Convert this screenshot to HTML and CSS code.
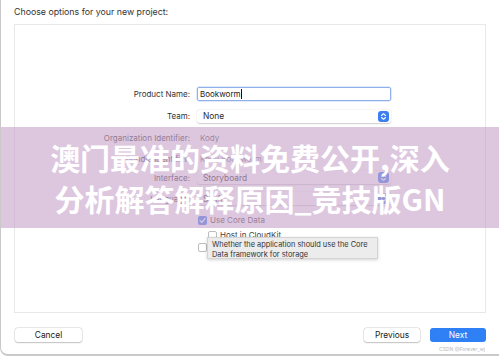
FILE: index.html
```html
<!DOCTYPE html>
<html lang="en">

<head>
    <meta charset="UTF-8">
    <meta name="viewport" content="width=device-width, initial-scale=1.0">
    <title>New Project Options</title>
    <link rel="stylesheet" href="styles.css">
</head>

<body>
    <div class="window">
        <div class="title">Choose options for your new project:</div>

        <div class="panel">
            <div class="form">
                <div class="row h22">
                    <label class="label">Product Name:</label>
                    <div class="field input">Bookworm<span class="caret"></span></div>
                </div>
                <div class="row h22">
                    <label class="label">Team:</label>
                    <div class="field popup">None<span class="stepper"><svg viewBox="0 0 11 11" width="11" height="11"><path d="M3.5 4.5 L5.5 2.7 L7.5 4.5 M3.5 6.5 L5.5 8.3 L7.5 6.5" fill="none" stroke="#fff" stroke-width="1.1" stroke-linecap="round" stroke-linejoin="round"/></svg></span></div>
                </div>
                <div class="row h22">
                    <label class="label">Organization Identifier:</label>
                    <div class="field plain">Kody</div>
                </div>
                <div class="row h19">
                    <label class="label">Bundle Identifier:</label>
                    <div class="field plain muted">Kody.Bookworm</div>
                </div>
                <div class="row h19">
                    <label class="label">Interface:</label>
                    <div class="field popup">Storyboard<span class="stepper"><svg viewBox="0 0 11 11" width="11" height="11"><path d="M3.5 4.5 L5.5 2.7 L7.5 4.5 M3.5 6.5 L5.5 8.3 L7.5 6.5" fill="none" stroke="#fff" stroke-width="1.1" stroke-linecap="round" stroke-linejoin="round"/></svg></span></div>
                </div>
                <div class="row h23">
                    <label class="label">Language:</label>
                    <div class="field popup">Swift<span class="stepper"><svg viewBox="0 0 11 11" width="11" height="11"><path d="M3.5 4.5 L5.5 2.7 L7.5 4.5 M3.5 6.5 L5.5 8.3 L7.5 6.5" fill="none" stroke="#fff" stroke-width="1.1" stroke-linecap="round" stroke-linejoin="round"/></svg></span></div>
                </div>
                <div class="row h20">
                    <span></span>
                    <div class="check"><span class="box on"><svg viewBox="0 0 9 9" width="9" height="9"><path d="M2 4.6 L3.8 6.4 L7 2.6" fill="none" stroke="#fff" stroke-width="1.3" stroke-linecap="round" stroke-linejoin="round"/></svg></span>Use Core Data</div>
                </div>
                <div class="row h10">
                    <span></span>
                    <div class="check indent"><span class="box"></span>Host in CloudKit</div>
                </div>
                <div class="row h14">
                    <span></span>
                    <div class="check"><span class="box"></span>Include Tests</div>
                </div>
            </div>
        </div>

        <div class="footer">
            <button class="btn">Cancel</button>
            <div class="spacer"></div>
            <button class="btn">Previous</button>
            <button class="btn primary">Next</button>
        </div>

        <div class="tooltip">Whether the application should use the Core<br>Data framework for storage</div>

        <div class="banner">澳门最准的资料免费公开,深入<br>分析解答解释原因_竞技版GN</div>

        <div class="watermark">CSDN @Forever_wj</div>
    </div>
</body>

</html>
```

FILE: styles.css
```css
/* Xcode style "new project" sheet */
body {
    margin: 0;
    padding: 0;
    background-color: #fff;
    font-family: Inter, "Liberation Sans", Arial, sans-serif;
    color: #2b2b2b;
}

.window {
    position: relative;
    width: 499px;
    height: 356px;
    box-sizing: border-box;
    border-left: 1px solid #c9c9c9;
    border-bottom: 2px solid #c9c9c9;
    border-bottom-left-radius: 8px;
    background-color: #fff;
    padding: 0 13px;
    overflow: hidden;
}

.title {
    height: 24px;
    line-height: 24px;
    font-size: 8.8px;
    color: #333;
}

.panel {
    height: 289px;
    box-sizing: border-box;
    border: 1px solid #e8e8e8;
    background-color: #fff;
    padding-top: 58px;
}

.form {
    display: flex;
    flex-direction: column;
}

.row {
    display: grid;
    grid-template-columns: 175px 194px;
    column-gap: 7px;
    align-items: center;
    font-size: 8px;
}

.h22 { height: 22px; }
.h20 { height: 20px; }
.h19 { height: 19px; }
.h23 { height: 23px; }
.h10 { height: 10px; }
.h14 { height: 14px; }

.label {
    text-align: right;
    color: #333;
}

.field {
    height: 14px;
    box-sizing: border-box;
    display: flex;
    align-items: center;
    position: relative;
}

.input {
    border: 1.5px solid #8fb0ea;
    border-radius: 2px;
    padding-left: 2px;
    color: #1a1a1a;
    box-shadow: 0 0 0 0.5px #c4d6f5;
}

.caret {
    display: inline-block;
    width: 1px;
    height: 10px;
    background-color: #111;
}

.popup {
    height: 13px;
    padding-left: 6px;
    border-radius: 3px;
    box-shadow: 0 0.5px 1.5px rgba(0, 0, 0, 0.2);
    font-size: 8.4px;
}

.stepper {
    position: absolute;
    right: 2px;
    top: 1px;
    width: 11px;
    height: 11px;
    border-radius: 3px;
    background-color: #3d7ff0;
    display: flex;
}

.plain {
    padding-left: 3px;
    color: #555;
}

.muted {
    color: #777;
}

.check {
    display: flex;
    align-items: center;
    gap: 3px;
    padding-left: 1px;
    color: #444;
}

.check.indent {
    padding-left: 11px;
}

.box {
    width: 9px;
    height: 9px;
    box-sizing: border-box;
    border: 0.8px solid #bdbdbd;
    border-radius: 2px;
    background-color: #fff;
    display: flex;
}

.box.on {
    border: none;
    background-color: #3d7ff0;
}

.footer {
    display: flex;
    align-items: center;
    gap: 10px;
    padding-top: 15px;
    padding-left: 1px;
}

.spacer {
    flex: 1;
}

.btn {
    height: 14px;
    padding: 0;
    border: none;
    border-radius: 3px;
    background-color: #fff;
    box-shadow: 0 0 0 0.5px rgba(0, 0, 0, 0.12), 0 0.5px 1.5px rgba(0, 0, 0, 0.2);
    font-family: Inter, "Liberation Sans", Arial, sans-serif;
    font-size: 8.4px;
    color: #222;
    width: 56px;
}

.btn:first-child {
    width: 67px;
}

.btn.primary {
    background-color: #2f7ff5;
    color: #fff;
    box-shadow: none;
}

.tooltip {
    position: absolute;
    left: 206px;
    top: 237px;
    width: 171px;
    height: 22px;
    box-sizing: border-box;
    padding: 2px 0 0 4px;
    background-color: #ececec;
    border: 0.5px solid #d4d4d4;
    box-shadow: 0 1px 3px rgba(0, 0, 0, 0.18);
    font-size: 7.4px;
    line-height: 9.6px;
    color: #333;
}

.banner {
    position: absolute;
    left: 0;
    right: 0;
    top: 127px;
    height: 101px;
    box-sizing: border-box;
    padding-top: 10px;
    background-color: rgba(200, 165, 204, 0.62);
    color: #fff;
    font-family: "Noto Sans CJK SC", "Noto Sans", sans-serif;
    font-weight: bold;
    font-size: 30px;
    line-height: 41px;
    text-align: center;
}

.watermark {
    position: absolute;
    right: 14px;
    bottom: 2px;
    font-size: 5px;
    color: #b8b8b8;
}
```
